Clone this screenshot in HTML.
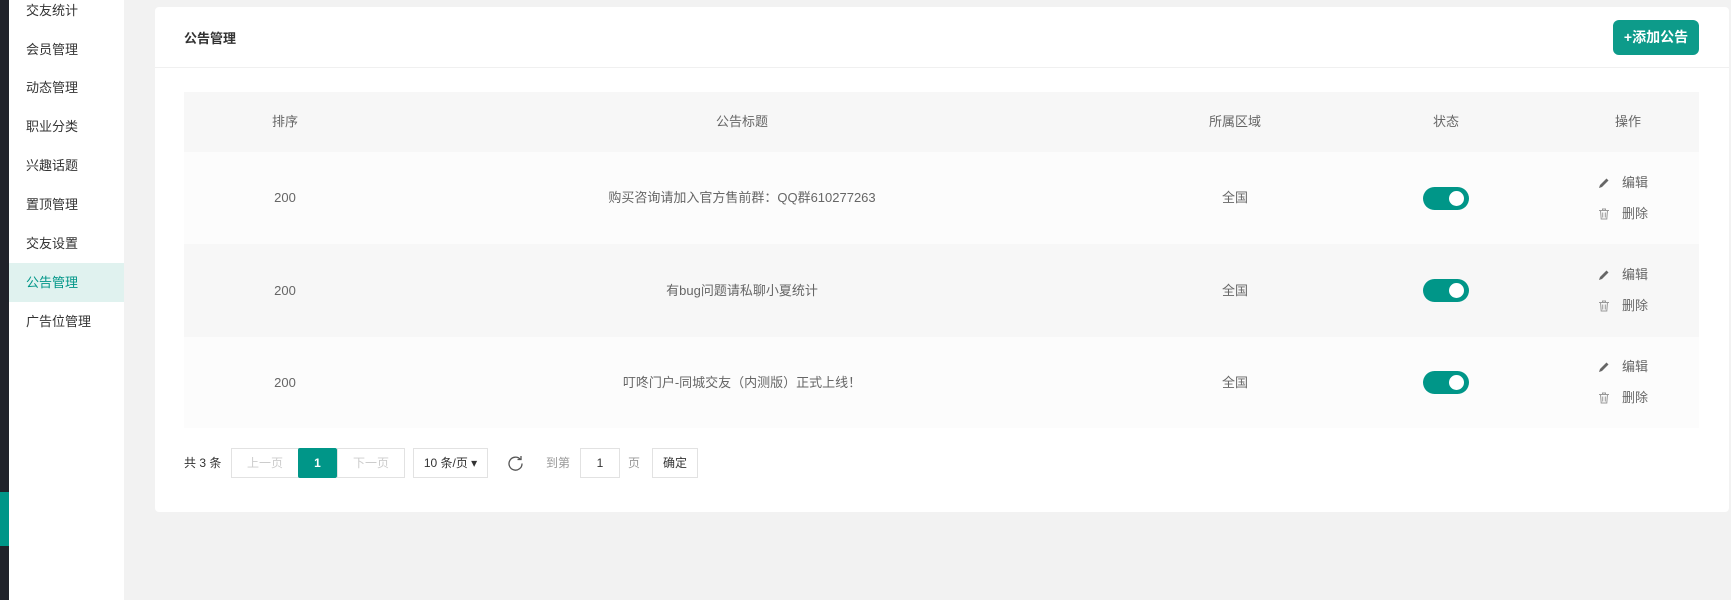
<!DOCTYPE html>
<html><head><meta charset="utf-8"><style>
*{margin:0;padding:0;box-sizing:border-box}
body{width:1731px;height:600px;overflow:hidden;background:#f2f2f2;font-family:"Liberation Sans","Noto Sans CJK SC",sans-serif;font-size:13px;color:#666;position:relative}
.abs{position:absolute}
.dark{left:0;top:0;width:9px;height:600px;background:#20222a}
.side{left:9px;top:0;width:115px;height:600px;background:#fff}
.si{position:absolute;left:0;width:115px;height:39px;line-height:39px;padding-left:17px;color:#333;font-size:13px}
.card{left:155px;top:7px;width:1574px;height:505px;background:#fff;border-radius:4px}
.tr{position:absolute;left:184px;width:1515px}
.c{position:absolute;top:0;text-align:center;transform:translateX(-50%);white-space:nowrap}
.tog{position:absolute;width:46px;height:23px;border-radius:12px;background:#009688}
.tog:after{content:"";position:absolute;right:5px;top:4px;width:15px;height:15px;border-radius:50%;background:#fff}
.pg{position:absolute;top:448px;height:30px;line-height:28px;border:1px solid #e2e2e2;text-align:center;font-size:12px;color:#ccc;background:#fff}
.act{position:absolute;left:1598px;line-height:20px;font-size:13px;color:#666}
.act svg{vertical-align:-2px;margin-right:12px}
</style></head><body>
<div class="abs dark"></div>
<div class="abs" style="left:0;top:492px;width:9px;height:54px;background:#009688"></div>
<div class="abs side">
<div class="si" style="top:-9px">交友统计</div>
<div class="si" style="top:30px">会员管理</div>
<div class="si" style="top:68px">动态管理</div>
<div class="si" style="top:107px">职业分类</div>
<div class="si" style="top:146px">兴趣话题</div>
<div class="si" style="top:185px">置顶管理</div>
<div class="si" style="top:224px">交友设置</div>
<div class="si" style="top:263px;background:#e0f2ef;color:#009688">公告管理</div>
<div class="si" style="top:302px">广告位管理</div>
</div>
<div class="abs card"></div>
<div class="abs" style="left:184px;top:28px;font-size:13px;font-weight:bold;color:#333">公告管理</div>
<div class="abs" style="left:155px;top:67px;width:1574px;height:1px;background:#f0f0f0"></div>
<div class="abs" style="left:1613px;top:20px;width:86px;height:35px;border-radius:6px;background:#0d9b8a;color:#fff;font-weight:bold;font-size:14px;line-height:35px;text-align:center">+添加公告</div>

<div class="tr" style="top:92px;height:60px;background:#f7f7f7;line-height:60px">
<div class="c" style="left:101px">排序</div><div class="c" style="left:558px">公告标题</div><div class="c" style="left:1051px">所属区域</div><div class="c" style="left:1262px">状态</div><div class="c" style="left:1444px">操作</div></div>

<div class="tr" style="top:152px;height:92px;background:#fcfcfc;line-height:92px">
<div class="c" style="left:101px">200</div><div class="c" style="left:558px">购买咨询请加入官方售前群：QQ群610277263</div><div class="c" style="left:1051px">全国</div></div>
<div class="tr" style="top:244px;height:93px;background:#f7f7f7;line-height:93px">
<div class="c" style="left:101px">200</div><div class="c" style="left:558px">有bug问题请私聊小夏统计</div><div class="c" style="left:1051px">全国</div></div>
<div class="tr" style="top:337px;height:91px;background:#fcfcfc;line-height:91px">
<div class="c" style="left:101px">200</div><div class="c" style="left:558px">叮咚门户-同城交友（内测版）正式上线！</div><div class="c" style="left:1051px">全国</div></div>

<div class="tog" style="left:1423px;top:187px"></div>
<div class="tog" style="left:1423px;top:279px"></div>
<div class="tog" style="left:1423px;top:371px"></div>

<div class="act" style="top:173px"><div><svg width="12" height="12" viewBox="0 0 12 12"><path d="M1 11 L2 8 L8.5 1.5 L10.5 3.5 L4 10 Z" fill="#666"/></svg>编辑</div><div style="margin-top:11px"><svg width="12" height="12" viewBox="0 0 12 12" fill="none" stroke="#999" stroke-width="1"><path d="M1 2.5h10M4.5 2.5V1h3v1.5M2.5 2.5l.7 8.5h5.6l.7-8.5M4.7 4.5v5M7.3 4.5v5"/></svg>删除</div></div>
<div class="act" style="top:265px"><div><svg width="12" height="12" viewBox="0 0 12 12"><path d="M1 11 L2 8 L8.5 1.5 L10.5 3.5 L4 10 Z" fill="#666"/></svg>编辑</div><div style="margin-top:11px"><svg width="12" height="12" viewBox="0 0 12 12" fill="none" stroke="#999" stroke-width="1"><path d="M1 2.5h10M4.5 2.5V1h3v1.5M2.5 2.5l.7 8.5h5.6l.7-8.5M4.7 4.5v5M7.3 4.5v5"/></svg>删除</div></div>
<div class="act" style="top:357px"><div><svg width="12" height="12" viewBox="0 0 12 12"><path d="M1 11 L2 8 L8.5 1.5 L10.5 3.5 L4 10 Z" fill="#666"/></svg>编辑</div><div style="margin-top:11px"><svg width="12" height="12" viewBox="0 0 12 12" fill="none" stroke="#999" stroke-width="1"><path d="M1 2.5h10M4.5 2.5V1h3v1.5M2.5 2.5l.7 8.5h5.6l.7-8.5M4.7 4.5v5M7.3 4.5v5"/></svg>删除</div></div>

<div class="abs" style="left:184px;top:448px;line-height:30px;font-size:12px;color:#333">共 3 条</div>
<div class="pg" style="left:231px;width:68px">上一页</div>
<div class="pg" style="left:298px;width:39px;background:#009688;border-color:#009688;color:#fff;border-radius:2px;font-weight:bold">1</div>
<div class="pg" style="left:337px;width:68px">下一页</div>
<div class="pg" style="left:413px;width:75px;color:#333">10 条/页 ▾</div>
<svg class="abs" style="left:507px;top:455px" width="17" height="17" viewBox="0 0 17 17" fill="none" stroke="#555" stroke-width="1.3"><path d="M13.5 4.5 A6.5 6.5 0 1 0 15 8.5"/><path d="M10.5 4.5 L14 4.5 L14 1"/></svg>
<div class="abs" style="left:546px;top:448px;line-height:30px;font-size:12px;color:#999">到第</div>
<div class="pg" style="left:580px;width:40px;color:#333">1</div>
<div class="abs" style="left:628px;top:448px;line-height:30px;font-size:12px;color:#999">页</div>
<div class="pg" style="left:652px;width:46px;color:#333">确定</div>
</body></html>
